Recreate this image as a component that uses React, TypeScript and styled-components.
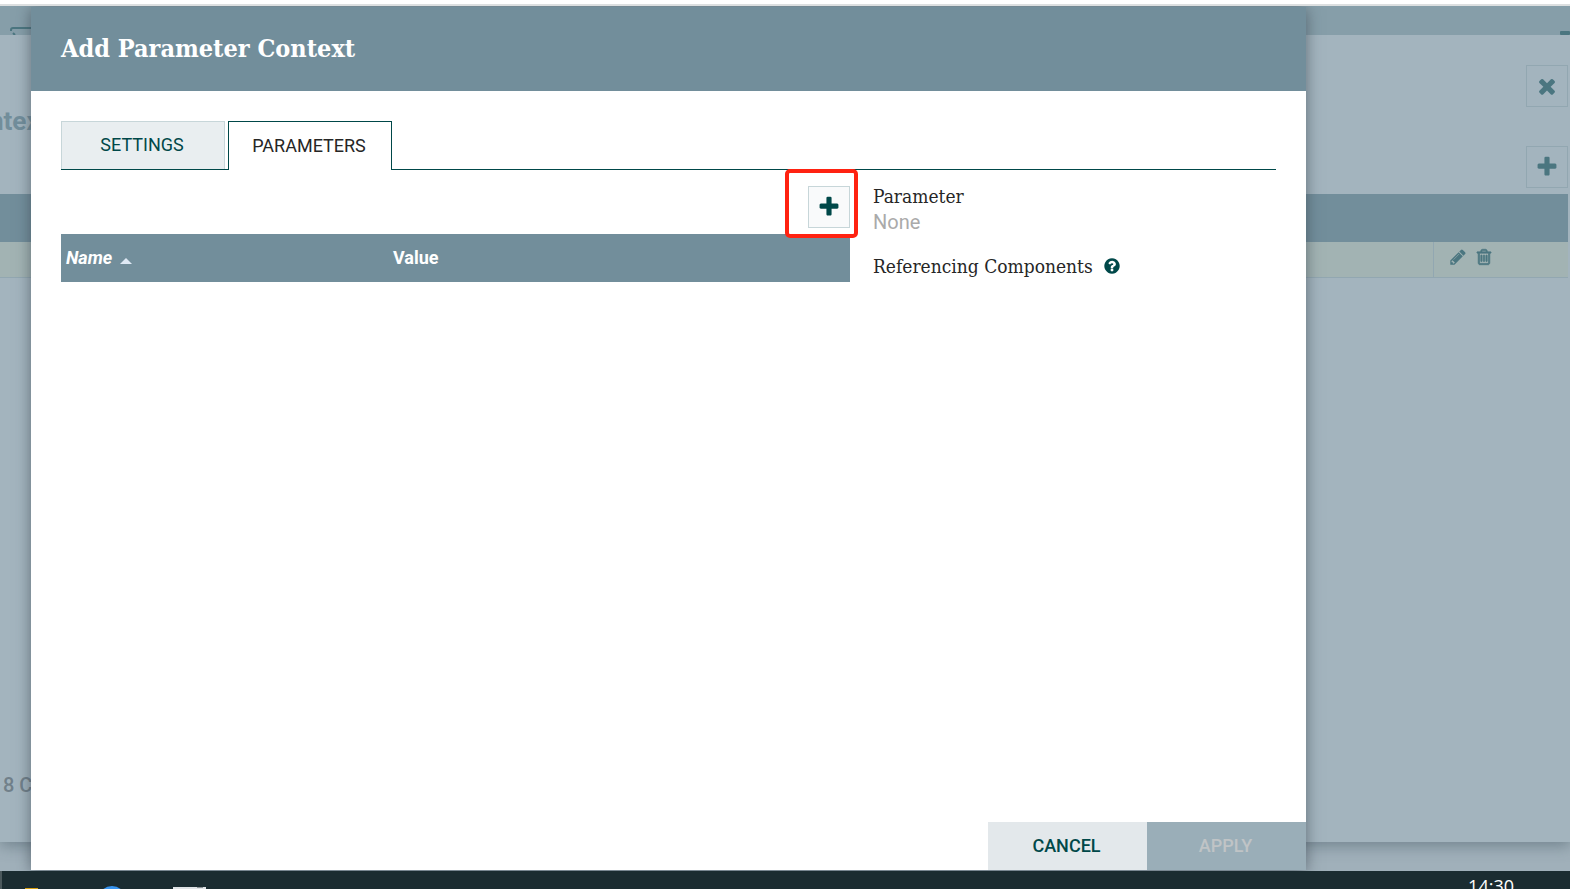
import React from "react";
import styled, { createGlobalStyle } from "styled-components";

const slab = `"Roboto Slab", "DejaVu Serif Condensed", "DejaVu Serif", serif`;

const GlobalStyle = createGlobalStyle`
  * { box-sizing: border-box; }
  body { margin: 0; font-family: Roboto, "Liberation Sans", sans-serif; font-size: 18px; color: #262626; overflow: hidden; }
  h1, h2, h3, p { margin: 0; font-weight: normal; }
  button { font: inherit; border: 0; padding: 0; cursor: pointer; }
`;

const Page = styled.div`
  display: flex;
  flex-direction: column;
  height: 100vh;
  overflow: hidden;
`;

const BrowserEdge = styled.div`
  flex: none;
  height: 6px;
  background: #fff;
  border-bottom: 2px solid #dcdfe0;
`;

const Workspace = styled.main`
  position: relative;
  flex: 1;
  min-height: 0;
  display: flex;
  flex-direction: column;
  padding-bottom: 29px;
  background: #a0b0ba;
  overflow: hidden;
`;

const CanvasToolbar = styled.div`
  flex: none;
  display: flex;
  justify-content: space-between;
  align-items: flex-end;
  height: 29px;
  padding-left: 10px;
  background: #869ea9;
`;

const Shell = styled.section`
  flex: 1;
  display: flex;
  flex-direction: column;
  background: #a3b4be;
  box-shadow: 0 4px 14px rgba(60, 80, 90, 0.45);
  clip-path: inset(0 0 -29px 0);
`;

const ShellBar = styled.div<{ $height: number }>`
  flex: none;
  display: flex;
  justify-content: space-between;
  align-items: flex-start;
  height: ${(p) => p.$height}px;
  padding-right: 2px;
`;

const ShellTitle = styled.h1`
  margin: 69px 0 0 -11px;
  font-size: 26px;
  line-height: 34px;
  font-weight: 700;
  color: #728e9b;
`;

const CloseSlot = styled.div`
  padding-top: 30px;
`;

const SquareButton = styled.button<{ $muted?: boolean }>`
  display: flex;
  align-items: center;
  justify-content: center;
  width: 42px;
  height: 42px;
  margin-left: auto;
  color: ${(p) => (p.$muted ? "#4b7680" : "#004849")};
  background: ${(p) => (p.$muted ? "transparent" : "#f9fafb")};
  border: 1px solid ${(p) => (p.$muted ? "#92a7b1" : "#c7d6d9")};
`;

const ContextTable = styled.table`
  width: calc(100% - 2px);
  border-collapse: collapse;
  table-layout: fixed;

  th { height: 48px; padding: 0; background: #728e9b; }
  td { height: 35px; padding: 0; background: #a2b3b3; border-bottom: 1px solid #92a7b1; }
  td + td { border-left: 1px solid #92a7b1; }
  th:last-child { width: 135px; }
`;

const RowActions = styled.div`
  display: flex;
  gap: 8px;
  padding: 0 0 4px 15px;
`;

const GlyphButton = styled.button`
  display: flex;
  color: #4b7680;
  background: none;
`;

const RecordCount = styled.p`
  margin: auto 0 46px 3px;
  font-size: 20px;
  line-height: 22px;
  font-weight: 500;
  color: #71808a;
`;

const Dialog = styled.div`
  position: absolute;
  inset: 1px 264px 1px 31px;
  display: flex;
  flex-direction: column;
  background: #fff;
  box-shadow: 0 2px 14px rgba(50, 62, 72, 0.6);
`;

const DialogHeader = styled.header`
  flex: none;
  display: flex;
  align-items: center;
  height: 84px;
  padding: 0 30px;
  background: #728e9b;
`;

const DialogTitle = styled.h2`
  font-family: ${slab};
  font-size: 25px;
  line-height: 36px;
  font-weight: 700;
  color: #fff;
`;

const DialogBody = styled.div`
  flex: 1;
  padding: 30px 30px 0;
`;

const Tabs = styled.div`
  display: flex;
  gap: 3px;
  height: 49px;
  border-bottom: 1px solid #004849;
`;

const Tab = styled.button<{ $active?: boolean }>`
  width: 164px;
  height: ${(p) => (p.$active ? 49 : 48)}px;
  padding: 0 2px 2px 0;
  color: ${(p) => (p.$active ? "#262626" : "#004849")};
  background: ${(p) => (p.$active ? "#fff" : "#e9eef0")};
  border: 1px solid ${(p) => (p.$active ? "#004849" : "#c7d6d9")};
  border-bottom: 0;
`;

const Columns = styled.div`
  display: grid;
  grid-template-columns: minmax(0, 1fr) 403px;
  gap: 23px;
  padding-top: 16px;
`;

const AddRow = styled.div`
  position: relative;
  display: flex;
  height: 48px;
`;

const Highlight = styled.span`
  position: absolute;
  top: -17px;
  right: -8px;
  width: 73px;
  height: 69px;
  border: 4px solid #ff2211;
  border-radius: 5px;
  pointer-events: none;
`;

const ParameterTable = styled.table`
  width: 100%;
  border-collapse: collapse;
  table-layout: fixed;

  th {
    height: 48px;
    padding: 0 5px 2px;
    text-align: left;
    font-weight: 700;
    color: #fff;
    background: #728e9b;
  }
  th:first-child { width: 327px; font-style: italic; }
`;

const SortMark = styled.svg`
  margin-left: 8px;
`;

const Details = styled.aside`
  display: flex;
  flex-direction: column;
`;

const FieldLabel = styled.h3`
  display: flex;
  align-items: center;
  gap: 10px;
  height: 20px;
  font-family: ${slab};
  font-size: 19px;
  line-height: 20px;
  white-space: nowrap;

  svg { color: #004849; }
`;

const EmptyValue = styled.p`
  height: 50px;
  padding-top: 4px;
  font-size: 20px;
  line-height: 24px;
  color: #aaa;
`;

const DialogFooter = styled.footer`
  flex: none;
  display: flex;
  justify-content: flex-end;
`;

const ActionButton = styled.button`
  width: 159px;
  height: 48px;
  padding: 0 2px 2px 0;
  font-weight: 500;
  color: #004849;
  background: #e3e8eb;

  &:disabled { color: #c0c4c6; background: #9aaeb8; }
`;

const Taskbar = styled.footer`
  flex: none;
  display: flex;
  align-items: flex-start;
  justify-content: space-between;
  height: 18px;
  padding-right: 56px;
  background: #1b2c31;
  border-left: 2px solid #4b585c;
  overflow: hidden;
`;

const Clock = styled.time`
  padding-top: 3px;
  font-family: "Open Sans", "Noto Sans", sans-serif;
  font-size: 18px;
  line-height: 24px;
  color: #fff;
`;

const glyphs = {
  plus: "M1600 736v192q0 40-28 68t-68 28h-416v416q0 40-28 68t-68 28h-192q-40 0-68-28t-28-68v-416h-416q-40 0-68-28t-28-68v-192q0-40 28-68t68-28h416v-416q0-40 28-68t68-28h192q40 0 68 28t28 68v416h416q40 0 68 28t28 68z",
  times: "M1490 1322q0 40-28 68l-136 136q-28 28-68 28t-68-28l-294-294-294 294q-28 28-68 28t-68-28l-136-136q-28-28-28-68t28-68l294-294-294-294q-28-28-28-68t28-68l136-136q28-28 68-28t68 28l294 294 294-294q28-28 68-28t68 28l136 136q28 28 28 68t-28 68l-294 294 294 294q28 28 28 68z",
  pencil: "M491 1536l91-91-235-235-91 91v107h128v128h107zm523-928q0-22-22-22-10 0-17 7l-542 542q-7 7-7 17 0 22 22 22 10 0 17-7l542-542q7-7 7-17zm-54-192l416 416-832 832h-416v-416zm683 96q0 53-37 90l-166 166-416-416 166-165q36-38 90-38 53 0 91 38l235 234q37 39 37 91z",
  trash: "M704 736v576q0 14-9 23t-23 9h-64q-14 0-23-9t-9-23v-576q0-14 9-23t23-9h64q14 0 23 9t9 23zm256 0v576q0 14-9 23t-23 9h-64q-14 0-23-9t-9-23v-576q0-14 9-23t23-9h64q14 0 23 9t9 23zm256 0v576q0 14-9 23t-23 9h-64q-14 0-23-9t-9-23v-576q0-14 9-23t23-9h64q14 0 23 9t9 23zm128 724v-948h-896v948q0 22 7 40.5t14.5 27 10.5 8.5h832q3 0 10.5-8.5t14.5-27 7-40.5zm-672-1076h448l-48-117q-7-9-17-11h-317q-10 2-17 11zm928 32v64q0 14-9 23t-23 9h-96v948q0 83-47 143.5t-113 60.5h-832q-66 0-113-58.5t-47-141.5v-952h-96q-14 0-23-9t-9-23v-64q0-14 9-23t23-9h309l70-167q15-37 54-63t79-26h320q40 0 79 26t54 63l70 167h309q14 0 23 9t9 23z",
  help: "M1024 1376v-192q0-14-9-23t-23-9h-192q-14 0-23 9t-9 23v192q0 14 9 23t23 9h192q14 0 23-9t9-23zm256-672q0-88-55.5-163t-138.5-116-170-41q-243 0-371 213-15 24 8 42l132 100q7 6 19 6 16 0 25-12 53-68 86-92 34-24 86-24 48 0 85.5 26t37.5 59q0 38-20 61t-68 45q-63 28-115.5 86.5t-52.5 125.5v36q0 14 9 23t23 9h192q14 0 23-9t9-23q0-19 21.5-49.5t54.5-49.5q32-18 49-28.5t46-35 44.5-48 28-60.5 12.5-81zm384 192q0 209-103 385.5t-279.5 279.5-385.5 103-385.5-103-279.5-279.5-103-385.5 103-385.5 279.5-279.5 385.5-103 385.5 103 279.5 279.5 103 385.5z",
};

interface GlyphProps {
  name: keyof typeof glyphs;
  size: number;
  weight?: number;
}

function Glyph({ name, size, weight = 0 }: GlyphProps) {
  return (
    <svg
      width={size}
      height={size}
      viewBox="0 0 1792 1792"
      fill="currentColor"
      stroke="currentColor"
      strokeWidth={weight}
      aria-hidden="true"
    >
      <path d={glyphs[name]} />
    </svg>
  );
}

export default function App() {
  return (
    <Page>
      <GlobalStyle />
      <BrowserEdge />
      <Workspace>
        <CanvasToolbar>
          <svg width="40" height="8" viewBox="0 0 40 8" fill="none" stroke="#4b7680" aria-hidden="true">
            <path d="M1 4V3Q1 1 3 1H40" strokeWidth="2" />
            <path d="M3 6L5 8" strokeWidth="2" />
          </svg>
          <svg width="10" height="4" aria-hidden="true">
            <rect width="10" height="4" rx="1" fill="#4b7680" />
          </svg>
        </CanvasToolbar>
        <Shell>
          <ShellBar $height={111}>
            <ShellTitle>ntex</ShellTitle>
            <CloseSlot>
              <SquareButton $muted aria-label="Close">
                <Glyph name="times" size={24} />
              </SquareButton>
            </CloseSlot>
          </ShellBar>
          <ShellBar $height={48}>
            <SquareButton $muted aria-label="Create parameter context">
              <Glyph name="plus" size={24} />
            </SquareButton>
          </ShellBar>
          <ContextTable>
            <thead>
              <tr>
                <th />
                <th />
              </tr>
            </thead>
            <tbody>
              <tr>
                <td />
                <td>
                  <RowActions>
                    <GlyphButton aria-label="Edit">
                      <Glyph name="pencil" size={18} />
                    </GlyphButton>
                    <GlyphButton aria-label="Delete">
                      <Glyph name="trash" size={18} weight={70} />
                    </GlyphButton>
                  </RowActions>
                </td>
              </tr>
            </tbody>
          </ContextTable>
          <RecordCount>8 C</RecordCount>
        </Shell>

        <Dialog role="dialog" aria-labelledby="dialog-title">
          <DialogHeader>
            <DialogTitle id="dialog-title">Add Parameter Context</DialogTitle>
          </DialogHeader>
          <DialogBody>
            <Tabs role="tablist">
              <Tab role="tab" aria-selected="false">SETTINGS</Tab>
              <Tab role="tab" aria-selected="true" $active>PARAMETERS</Tab>
            </Tabs>
            <Columns>
              <div>
                <AddRow>
                  <SquareButton aria-label="Add parameter">
                    <Glyph name="plus" size={24} />
                  </SquareButton>
                  <Highlight />
                </AddRow>
                <ParameterTable>
                  <thead>
                    <tr>
                      <th scope="col" aria-sort="ascending">
                        Name
                        <SortMark width="12" height="6" aria-hidden="true">
                          <path d="M0 6L6 0L12 6Z" fill="#dfe9f5" />
                        </SortMark>
                      </th>
                      <th scope="col">Value</th>
                    </tr>
                  </thead>
                </ParameterTable>
              </div>
              <Details>
                <FieldLabel>Parameter</FieldLabel>
                <EmptyValue>None</EmptyValue>
                <FieldLabel>
                  Referencing Components
                  <Glyph name="help" size={18} />
                </FieldLabel>
              </Details>
            </Columns>
          </DialogBody>
          <DialogFooter>
            <ActionButton>CANCEL</ActionButton>
            <ActionButton disabled>APPLY</ActionButton>
          </DialogFooter>
        </Dialog>
      </Workspace>
      <Taskbar>
        <svg width="220" height="18" aria-hidden="true">
          <rect x="23" y="17" width="13" height="1" fill="#d9a010" />
          <circle cx="110" cy="29" r="14" fill="#3794f0" />
          <rect x="171" y="16" width="33" height="2" fill="#dfe3e6" />
          <rect x="195" y="16" width="6" height="1" fill="#8b9296" />
        </svg>
        <Clock>14:30</Clock>
      </Taskbar>
    </Page>
  );
}
